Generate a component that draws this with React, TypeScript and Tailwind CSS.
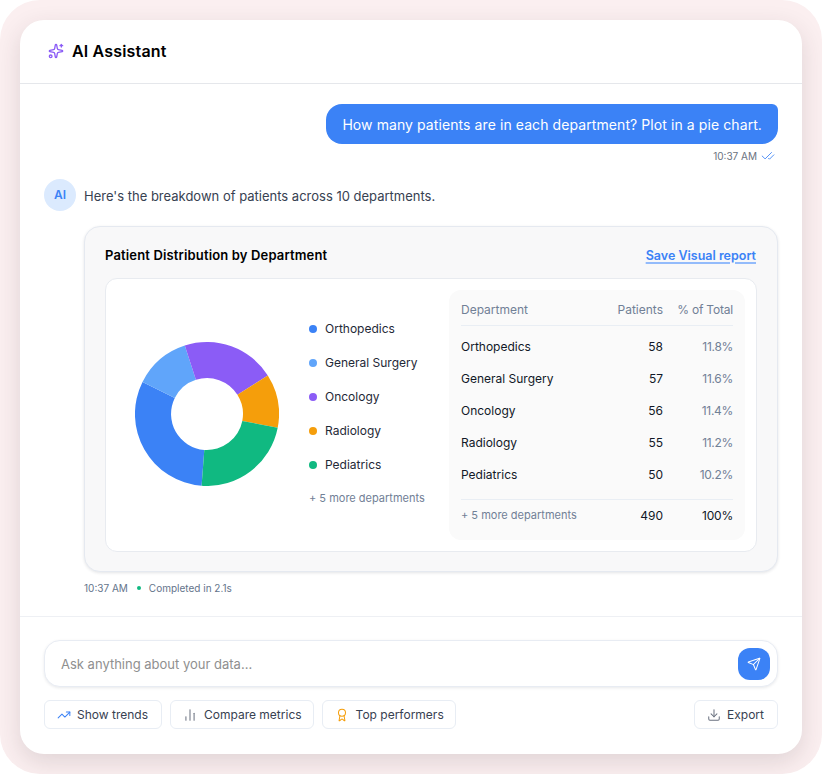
import React from "react";
import { Sparkles, CheckCheck, TrendingUp, ChartNoAxesColumn, Award, Download, Send } from "lucide-react";

const legend = [
  ["Orthopedics", "bg-[#3b82f6]"],
  ["General Surgery", "bg-[#60a5fa]"],
  ["Oncology", "bg-[#8b5cf6]"],
  ["Radiology", "bg-[#f59e0b]"],
  ["Pediatrics", "bg-[#10b981]"],
];
const rows = [
  ["Orthopedics", "58", "11.8%"],
  ["General Surgery", "57", "11.6%"],
  ["Oncology", "56", "11.4%"],
  ["Radiology", "55", "11.2%"],
  ["Pediatrics", "50", "10.2%"],
];

function Donut() {
  return (
    <svg width="144" height="144" viewBox="-72 -72 144 144" className="shrink-0">
      <path fill="#3b82f6" d="M-64.5 -32.1A72 72 0 0 0 -5.4 71.8L-2.7 35.9A36 36 0 0 1 -32.2 -16Z" />
      <path fill="#60a5fa" d="M-22.2 -68.5A72 72 0 0 0 -64.5 -32.1L-32.2 -16A36 36 0 0 1 -11.1 -34.2Z" />
      <path fill="#8b5cf6" d="M60.8 -38.5A72 72 0 0 0 -22.2 -68.5L-11.1 -34.2A36 36 0 0 1 30.4 -19.3Z" />
      <path fill="#f59e0b" d="M70.7 13.8A72 72 0 0 0 60.8 -38.5L30.4 -19.3A36 36 0 0 1 35.3 6.9Z" />
      <path fill="#10b981" d="M-5.4 71.8A72 72 0 0 0 70.7 13.8L35.3 6.9A36 36 0 0 1 -2.7 35.9Z" />
    </svg>
  );
}

function Chip({ icon, label, className }: { icon: React.ReactNode; label: string; className: string }) {
  return (
    <button className={`h-[29px] flex items-center rounded-md border border-[#e8edf4] bg-white text-[12px] font-normal text-[#374151] ${className}`}>
      {icon}
      <span>{label}</span>
    </button>
  );
}

export default function App() {
  return (
    <div
      className="w-[822px] h-[774px] p-5 rounded-[40px] bg-[#fbeff0] text-[#0a0a0a] overflow-hidden antialiased"
      style={{ fontFamily: "Inter, sans-serif" }}
    >
      <div className="h-[734px] flex flex-col rounded-[24px] bg-white shadow-[0_8px_24px_rgba(60,40,50,0.14)]">
        <header className="h-[64px] shrink-0 flex items-center gap-2 pl-[28px] pb-[1px] border-b border-[#e5e7eb]">
          <Sparkles size={16} strokeWidth={2} className="text-[#8b5cf6]" />
          <h1 className="text-[16px] leading-6 font-semibold text-black tracking-[0.17px]">AI Assistant</h1>
        </header>

        <main className="flex-1 flex flex-col px-6 pt-5">
          <div className="flex flex-col items-end">
            <div className="h-10 flex items-center rounded-2xl rounded-tr-md bg-[#3b82f6] px-4 text-[14px] text-white tracking-[0.085px]">
              How many patients are in each department? Plot in a pie chart.
            </div>
            <div className="mt-[5px] h-[14px] flex items-center gap-[4px] pr-[3px] text-[10px] text-[#6b7280]">
              <span>10:37 AM</span>
              <CheckCheck size={14} strokeWidth={1.5} className="text-[#3b82f6]" />
            </div>
          </div>

          <div className="mt-[16px] flex items-center gap-2">
            <div className="w-8 h-8 flex items-center justify-center rounded-full bg-[#dbeafe] text-[12px] font-semibold text-[#3b82f6]">AI</div>
            <p className="text-[13px] pt-[3px] text-[#374151]">Here's the breakdown of patients across 10 departments.</p>
          </div>

          <section className="ml-10 mt-[15px] h-[346px] rounded-2xl border border-[#e5e9f0] bg-[#f8f8f9] px-5 pt-[15px] shadow-[0_1px_3px_rgba(30,41,59,0.12)]">
            <div className="h-[26px] flex items-center justify-between">
              <h2 className="text-[13px] font-semibold text-black tracking-[0.15px] pt-[2px]">Patient Distribution by Department</h2>
              <a className="mr-[1px] pt-[2px] text-[12.5px] font-semibold text-[#3b82f6] underline decoration-2 underline-offset-2 decoration-[#93bbfb]">Save Visual report</a>
            </div>
            <div className="mt-[10px] h-[274px] flex rounded-xl border border-[#e8ebf0] bg-white py-[11px] pl-[29px] pr-[11px]">
              <div className="flex items-center pb-[3px]">
                <Donut />
              </div>
              <div className="ml-[30px] w-[140px] flex flex-col pt-[22px]">
                {legend.map(([name, color]) => (
                  <div key={name} className="h-[34px] flex items-center gap-2 text-[12px] text-[#1f2937]">
                    <span className={`w-2 h-2 rounded-full ${color}`} />
                    <span>{name}</span>
                  </div>
                ))}
                <div className="h-[34px] pb-[2px] flex items-center text-[11px] text-[#718096]">+ 5 more departments</div>
              </div>
              <div className="w-[296px] rounded-xl bg-[#fafafa] px-3 flex flex-col">
                <div className="h-[36px] shrink-0 pt-[4px] flex items-center text-[12px] text-[#718096] border-b border-[#e9eef4]">
                  <span className="flex-1">Department</span>
                  <span className="w-[60px] text-right">Patients</span>
                  <span className="w-[70px] text-right tracking-[-0.2px]">% of Total</span>
                </div>
                <div className="pt-[5px]">
                  {rows.map(([d, p, t]) => (
                    <div key={d} className="h-8 flex items-center text-[12px] text-[#111827]">
                      <span className="flex-1">{d}</span>
                      <span className="w-[60px] text-right">{p}</span>
                      <span className="w-[70px] text-right text-[#718096] tracking-[-0.3px]">{t}</span>
                    </div>
                  ))}
                </div>
                <div className="mt-[8px] h-[32px] flex items-center border-t border-[#e9eef4] text-[12px] text-[#111827]">
                  <span className="flex-1 text-[11px] text-[#718096]">+ 5 more departments</span>
                  <span className="w-[60px] text-right">490</span>
                  <span className="w-[70px] text-right tracking-[-0.2px]">100%</span>
                </div>
              </div>
            </div>
          </section>

          <div className="ml-10 mt-[9px] h-[14px] flex items-center text-[10px] text-[#64748b]">
            <span>10:37 AM</span>
            <span className="ml-[9px] mr-2 w-1 h-1 rounded-full bg-[#10b981]" />
            <span>Completed in 2.1s</span>
          </div>
        </main>

        <footer className="h-[138px] shrink-0 border-t border-[#eef0f4] px-6 pt-[23px]">
          <div className="h-[47px] flex items-center justify-between rounded-2xl border border-[#e8ecf3] bg-white pl-4 pr-[7px] shadow-[0_1px_3px_rgba(30,41,59,0.1)]">
            <span className="pt-[2px] text-[13px] text-[#8f8f8f]">Ask anything about your data...</span>
            <button className="w-8 h-8 flex items-center justify-center rounded-xl bg-[#3b82f6]">
              <Send size={14} strokeWidth={1.75} className="text-white" />
            </button>
          </div>
          <div className="mt-[13px] flex items-center gap-2">
            <Chip className="pl-3 pr-[13px] gap-[6px]" icon={<TrendingUp size={14} strokeWidth={1.75} className="text-[#3b82f6]" />} label="Show trends" />
            <Chip className="pl-3 pr-[11px] gap-[7px]" icon={<ChartNoAxesColumn size={14} strokeWidth={1.75} className="text-[#6b7280]" />} label="Compare metrics" />
            <Chip className="pl-3 pr-[11px] gap-[7px]" icon={<Award size={14} strokeWidth={1.75} className="text-[#f59e0b]" />} label="Top performers" />
            <Chip className="ml-auto pl-3 pr-[13px] gap-[6px]" icon={<Download size={14} strokeWidth={1.75} className="text-[#6b7280]" />} label="Export" />
          </div>
        </footer>
      </div>
    </div>
  );
}
